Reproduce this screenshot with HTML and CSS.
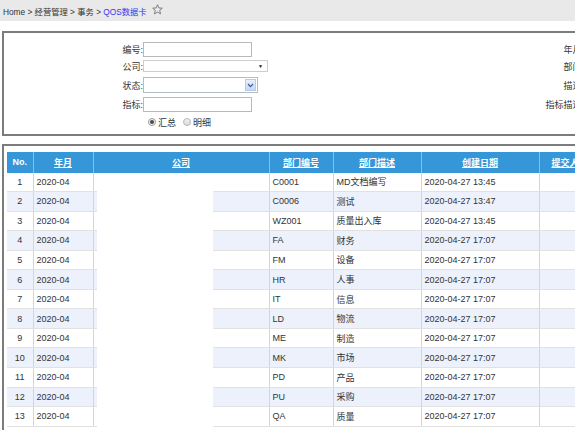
FILE: index.html
```html
<!DOCTYPE html>
<html lang="zh-CN">
<head>
<meta charset="utf-8">
<title>QOS数据卡</title>
<link rel="stylesheet" href="styles.css">
</head>
<body>
<div class="page">
  <div class="crumbs">
    <span>Home &gt; 经营管理 &gt; 事务 &gt; </span><a class="cur">QOS数据卡</a>
    <svg class="star" viewBox="0 0 12 12" width="11" height="11"><path d="M6 0.8 L7.5 4.3 L11.2 4.6 L8.4 7 L9.3 10.8 L6 8.8 L2.7 10.8 L3.6 7 L0.8 4.6 L4.5 4.3 Z" fill="none" stroke="#6b6b6b" stroke-width="0.9" stroke-linejoin="round"/></svg>
  </div>

  <div class="panel search">
    <div class="form">
      <label class="lbl">编号:</label>
      <div><input class="txt" type="text"></div>
      <label class="lbl">年月:</label>
      <div></div>

      <label class="lbl">公司:</label>
      <div><div class="sel1"><span class="tri">&#9660;</span></div></div>
      <label class="lbl">部门:</label>
      <div></div>

      <label class="lbl">状态:</label>
      <div><div class="sel2"><span class="btn"><svg viewBox="0 0 8 6" width="7" height="5"><path d="M1 1.2 L4 4.4 L7 1.2" fill="none" stroke="#2f5e9e" stroke-width="1.4"/></svg></span></div></div>
      <label class="lbl">描述:</label>
      <div></div>

      <label class="lbl">指标:</label>
      <div><input class="txt" type="text"></div>
      <label class="lbl">指标描述:</label>
      <div></div>

      <div></div>
      <div class="radios">
        <span class="radio on"></span><span class="rtext">汇总</span>
        <span class="radio off"></span><span class="rtext">明细</span>
      </div>
      <div></div>
      <div></div>
    </div>
  </div>

  <div class="panel list">
    <div class="tablewrap">
      <table class="grid">
        <colgroup>
          <col class="c-no"><col class="c-ym"><col class="c-co"><col class="c-dno"><col class="c-dd"><col class="c-dt"><col class="c-sub">
        </colgroup>
        <thead>
          <tr>
            <th>No.</th>
            <th><a>年月</a></th>
            <th><a>公司</a></th>
            <th><a>部门编号</a></th>
            <th><a>部门描述</a></th>
            <th><a>创建日期</a></th>
            <th><a>提交人</a></th>
          </tr>
        </thead>
        <tbody>
          <tr><td class="no">1</td><td>2020-04</td><td></td><td>C0001</td><td>MD文档编写</td><td>2020-04-27 13:45</td><td></td></tr>
          <tr class="alt"><td class="no">2</td><td>2020-04</td><td></td><td>C0006</td><td>测试</td><td>2020-04-27 13:47</td><td></td></tr>
          <tr><td class="no">3</td><td>2020-04</td><td></td><td>WZ001</td><td>质量出入库</td><td>2020-04-27 13:45</td><td></td></tr>
          <tr class="alt"><td class="no">4</td><td>2020-04</td><td></td><td>FA</td><td>财务</td><td>2020-04-27 17:07</td><td></td></tr>
          <tr><td class="no">5</td><td>2020-04</td><td></td><td>FM</td><td>设备</td><td>2020-04-27 17:07</td><td></td></tr>
          <tr class="alt"><td class="no">6</td><td>2020-04</td><td></td><td>HR</td><td>人事</td><td>2020-04-27 17:07</td><td></td></tr>
          <tr><td class="no">7</td><td>2020-04</td><td></td><td>IT</td><td>信息</td><td>2020-04-27 17:07</td><td></td></tr>
          <tr class="alt"><td class="no">8</td><td>2020-04</td><td></td><td>LD</td><td>物流</td><td>2020-04-27 17:07</td><td></td></tr>
          <tr><td class="no">9</td><td>2020-04</td><td></td><td>ME</td><td>制造</td><td>2020-04-27 17:07</td><td></td></tr>
          <tr class="alt"><td class="no">10</td><td>2020-04</td><td></td><td>MK</td><td>市场</td><td>2020-04-27 17:07</td><td></td></tr>
          <tr><td class="no">11</td><td>2020-04</td><td></td><td>PD</td><td>产品</td><td>2020-04-27 17:07</td><td></td></tr>
          <tr class="alt"><td class="no">12</td><td>2020-04</td><td></td><td>PU</td><td>采购</td><td>2020-04-27 17:07</td><td></td></tr>
          <tr><td class="no">13</td><td>2020-04</td><td></td><td>QA</td><td>质量</td><td>2020-04-27 17:07</td><td></td></tr>
        </tbody>
      </table>
      <div class="redact"></div>
    </div>
  </div>
</div>
</body>
</html>
```
FILE: styles.css
```css
html, body {
  margin: 0;
  padding: 0;
  overflow: hidden;
  background: #fff;
}
body {
  font-family: "Liberation Sans", "Noto Sans CJK SC", sans-serif;
  font-size: 9px;
  color: #333;
}
.page {
  width: 900px;
}

/* breadcrumb */
.crumbs {
  height: 21px;
  background: #e9e9e9;
  display: flex;
  align-items: center;
  padding-left: 3px;
  font-size: 8.3px;
  color: #333;
  white-space: pre;
}
.crumbs .cur {
  color: #3434ee;
}
.crumbs .star {
  margin-left: 5px;
  margin-top: -2px;
}

/* panels */
.panel {
  margin-left: 2px;
  border: 2px solid #7c7c7c;
}
.search {
  margin-top: 10px;
  height: 101px;
  box-sizing: content-box;
}
.form {
  display: grid;
  grid-template-columns: 139px 257px 184px 200px;
  grid-template-rows: 16px 18px 20px 19px 16px;
  padding-top: 8px;
  align-items: center;
}
.lbl {
  text-align: right;
  white-space: nowrap;
}
input.txt {
  display: block;
  width: 109px;
  height: 15px;
  box-sizing: border-box;
  border: 1px solid #b9b9b9;
  padding: 0;
  margin: 0;
  font: inherit;
  background: #fff;
}
.sel1 {
  width: 125px;
  height: 12px;
  box-sizing: border-box;
  border: 1px solid #cdcdcd;
  display: flex;
  align-items: center;
  justify-content: flex-end;
  padding-right: 4px;
}
.sel1 .tri {
  font-size: 5px;
  color: #111;
}
.sel2 {
  width: 115px;
  height: 16px;
  box-sizing: border-box;
  border: 1px solid #b3bccb;
  display: flex;
  justify-content: flex-end;
  padding: 1px;
}
.sel2 .btn {
  width: 11px;
  background: linear-gradient(#e9f0fb, #c8d8f1);
  border: 1px solid #b8cbe8;
  box-sizing: border-box;
  display: flex;
  align-items: center;
  justify-content: center;
}
.radios {
  display: flex;
  align-items: center;
  padding-left: 5px;
}
.radio {
  width: 8px;
  height: 8px;
  box-sizing: border-box;
  border-radius: 50%;
  border: 1px solid #9a9a9a;
  display: inline-flex;
  align-items: center;
  justify-content: center;
}
.radio.on {
  background: #f4f4f4;
}
.radio.on::after {
  content: "";
  width: 4px;
  height: 4px;
  border-radius: 50%;
  background: #4a4a4a;
}
.radio.off {
  border-color: #b5b5b5;
  background: linear-gradient(#f2f2f2, #dadada);
  margin-left: 7px;
}
.rtext {
  margin-left: 2px;
}

/* list */
.list {
  margin-top: 8px;
  height: 300px;
  padding: 6px 0 0 3px;
}
.tablewrap {
  position: relative;
  width: 584px;
}
.grid {
  border-collapse: collapse;
  table-layout: fixed;
  width: 584px;
}
.c-no { width: 26px; }
.c-ym { width: 60px; }
.c-co { width: 176px; }
.c-dno { width: 64px; }
.c-dd { width: 88px; }
.c-dt { width: 118px; }
.c-sub { width: 52px; }

.grid th {
  height: 20.5px;
  padding: 0;
  background: #3597d8;
  color: #fff;
  font-weight: bold;
  text-align: center;
  border-right: 1px solid #86bfe8;
  white-space: nowrap;
}
.grid th a {
  text-decoration: underline;
}
.grid td {
  height: 18.55px;
  padding: 0 0 0 3px;
  border-right: 1px solid #d5d5d5;
  border-bottom: 1px solid #e1e1e1;
  white-space: nowrap;
  overflow: hidden;
}
.grid td.no {
  text-align: center;
  padding: 0;
}
.grid tr.alt td {
  background: #edf1fb;
}
.redact {
  position: absolute;
  left: 90px;
  top: 21px;
  width: 116px;
  bottom: 0;
  background: #fff;
}
```
